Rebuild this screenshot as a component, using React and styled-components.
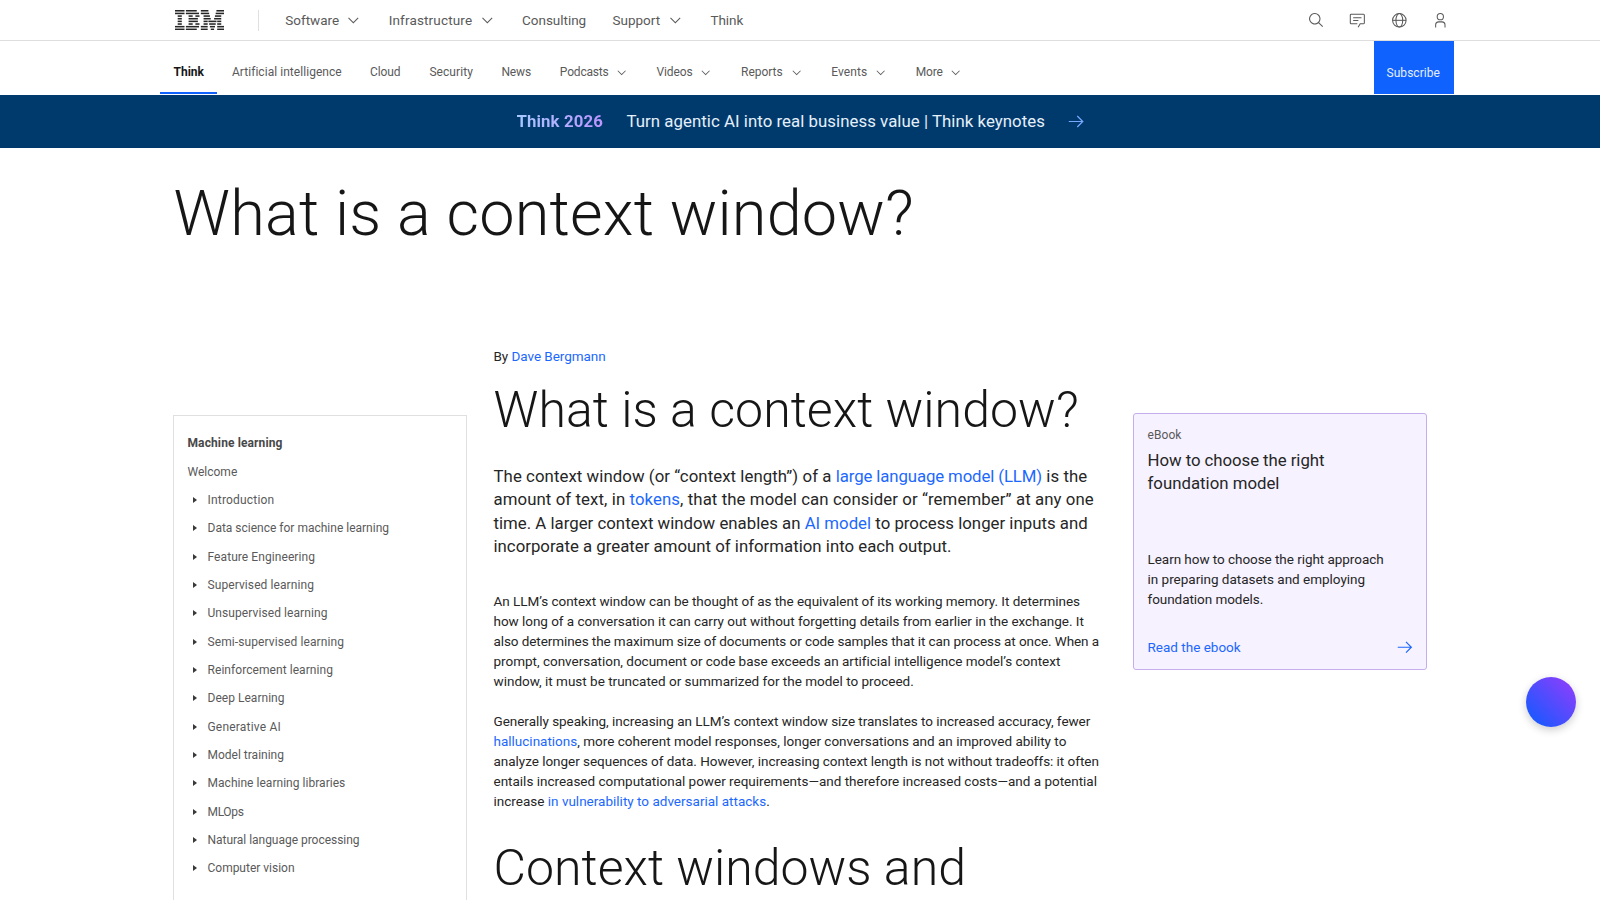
import React from 'react'
import styled, { createGlobalStyle } from 'styled-components'

const topLinks = [
	{ label: 'Software', width: 54.2, spacing: 0.013, menu: true },
	{ label: 'Infrastructure', width: 84.1, spacing: 0.152, menu: true },
	{ label: 'Consulting', width: 63.8, spacing: -0.033 },
	{ label: 'Support', width: 48.7, spacing: -0.015, menu: true },
	{ label: 'Think', width: 33, spacing: -0.1 }
]

const tabs = [
	{ label: 'Think', width: 30.2, spacing: 0.01, active: true },
	{ label: 'Artificial intelligence', width: 109.7, spacing: 0.046 },
	{ label: 'Cloud', width: 31.2, spacing: -0.09 },
	{ label: 'Security', width: 43.7, spacing: 0.066 },
	{ label: 'News', width: 30.2, spacing: -0.1 },
	{ label: 'Podcasts', width: 68.4, spacing: -0.18, menu: true },
	{ label: 'Videos', width: 56.3, spacing: -0.12, menu: true },
	{ label: 'Reports', width: 61.8, spacing: -0.046, menu: true },
	{ label: 'Events', width: 56.3, spacing: 0.08, menu: true },
	{ label: 'More', width: 46.8, spacing: -0.16, menu: true }
]

const chapters = [
	['Introduction', 0.19],
	['Data science for machine learning', 0],
	['Feature Engineering', 0.077],
	['Supervised learning', 0.088],
	['Unsupervised learning', 0.08],
	['Semi-supervised learning', 0.098],
	['Reinforcement learning', 0.063],
	['Deep Learning', 0.027],
	['Generative AI', 0.2],
	['Model training', 0.002],
	['Machine learning libraries', 0.03],
	['MLOps', -0.35],
	['Natural language processing', -0.028],
	['Computer vision', -0.012]
]

// bars of the logo, top to bottom: [x, width] pairs on a 1000 wide grid
const logoBars = [
	[[0, 194], [222, 222], [527, 155], [845, 155]],
	[[0, 194], [222, 268], [527, 170], [830, 170]],
	[[55, 84], [277, 84], [416, 84], [583, 130], [815, 129]],
	[[55, 84], [277, 190], [583, 146], [798, 146]],
	[[55, 84], [277, 190], [583, 84], [681, 166], [861, 83]],
	[[55, 84], [277, 84], [416, 84], [583, 84], [697, 134], [861, 83]],
	[[0, 194], [222, 268], [527, 140], [712, 104], [861, 139]],
	[[0, 194], [222, 222], [527, 140], [730, 68], [861, 139]]
]

const Logo = () => (
	<LogoSvg viewBox="0 0 1000 400" preserveAspectRatio="none">
		{logoBars.map((bars, row) => bars.map(([x, width]) => (
			<rect key={`${row}-${x}`} x={x} y={row * 53} width={width} height="31" />
		)))}
	</LogoSvg>
)

const Chevron = ({ size }) => (
	<Icon viewBox="0 0 32 32" size={size}>
		<path d="M16 22 6 12 7.4 10.6 16 19.2 24.6 10.6 26 12z" />
	</Icon>
)

const ArrowRight = ({ size }) => (
	<Icon viewBox="0 0 32 32" size={size}>
		<path d="M18 6 16.57 7.393 24.15 15H3v2h21.15l-7.58 7.573L18 26l10-10z" />
	</Icon>
)

const Masthead = () => (
	<TopBar>
		<Logo />
		<Divider />
		<TopNav>
			{topLinks.map(({ label, width, spacing, menu }) => (
				<TopLink key={label}>
					<TopLabel width={width} spacing={spacing}>{label}</TopLabel>
					{menu && <Chevron size={16.67} />}
				</TopLink>
			))}
		</TopNav>
		<Tools>
			<Tool>
				<Icon viewBox="0 0 32 32" size={16.67}>
					<path d="M29,27.5859l-7.5521-7.5521a11.0177,11.0177,0,1,0-1.4141,1.4141L27.5859,29ZM4,13a9,9,0,1,1,9,9A9.01,9.01,0,0,1,4,13Z" />
				</Icon>
			</Tool>
			<Tool>
				<LineIcon viewBox="0 0 32 32" size={16.67}>
					<path d="M16 22.5H4A1.5 1.5 0 0 1 2.5 21V6A1.5 1.5 0 0 1 4 4.5h24A1.5 1.5 0 0 1 29.5 6v15a1.5 1.5 0 0 1-1.500 1.500h-6.500l-4 7" />
					<path d="M8 11h16M8 16.500h10" />
				</LineIcon>
			</Tool>
			<Tool>
				<LineIcon viewBox="0 0 32 32" size={16.67}>
					<circle cx="16" cy="16" r="13" />
					<ellipse cx="16" cy="16" rx="6.5" ry="13" />
					<path d="M3 16h26" />
				</LineIcon>
			</Tool>
			<Tool>
				<LineIcon viewBox="0 0 32 32" size={16.67}>
					<circle cx="16" cy="9" r="6" />
					<path d="M7 30v-5a6 6 0 0 1 6-6h6a6 6 0 0 1 6 6v5" />
				</LineIcon>
			</Tool>
		</Tools>
	</TopBar>
)

const Tabs = () => (
	<TabBar>
		{tabs.map(({ label, width, spacing, active, menu }) => (
			<Tab key={label} active={active}>
				<TabLabel width={width} spacing={spacing}>
					{label}
					{menu && <Chevron size={13.33} />}
				</TabLabel>
			</Tab>
		))}
		<Subscribe>Subscribe</Subscribe>
	</TabBar>
)

const Contents = () => (
	<Sidebar>
		<SideTitle>Machine learning</SideTitle>
		<SideLink spacing={0}>Welcome</SideLink>
		{chapters.map(([label, spacing]) => (
			<SideLink key={label} spacing={spacing}>
				<Caret viewBox="0 0 4 6"><path d="M0 0 4 3 0 6z" /></Caret>
				{label}
			</SideLink>
		))}
	</Sidebar>
)

const Article = () => (
	<Content>
		<Byline>By <Link>Dave Bergmann</Link></Byline>
		<Heading spacing={0.06}>What is a context window?</Heading>
		<Lead>
			<Line spacing={0.068}>The context window (or “context length”) of a <Link spacing={-0.11}>large language model (LLM)</Link> is the</Line>
			<Line spacing={0.087}>amount of text, in <Link>tokens</Link>, that the model can consider or “remember” at any one</Line>
			<Line spacing={0.012}>time. A larger context window enables an <Link>AI model</Link> to process longer inputs and</Line>
			<Line spacing={0.008}>incorporate a greater amount of information into each output.</Line>
		</Lead>
		<Paragraph>
			<Line spacing={-0.032}>An LLM’s context window can be thought of as the equivalent of its working memory. It determines</Line>
			<Line spacing={-0.032}>how long of a conversation it can carry out without forgetting details from earlier in the exchange. It</Line>
			<Line spacing={-0.08}>also determines the maximum size of documents or code samples that it can process at once. When a</Line>
			<Line spacing={-0.015}>prompt, conversation, document or code base exceeds an artificial intelligence model’s context</Line>
			<Line spacing={-0.002}>window, it must be truncated or summarized for the model to proceed.</Line>
		</Paragraph>
		<Paragraph>
			<Line spacing={-0.029}>Generally speaking, increasing an LLM’s context window size translates to increased accuracy, fewer</Line>
			<Line spacing={-0.001}><Link>hallucinations</Link>, more coherent model responses, longer conversations and an improved ability to</Line>
			<Line spacing={-0.033}>analyze longer sequences of data. However, increasing context length is not without tradeoffs: it often</Line>
			<Line spacing={-0.007}>entails increased computational power requirements—and therefore increased costs—and a potential</Line>
			<Line spacing={0.005}>increase <Link>in vulnerability to adversarial attacks</Link>.</Line>
		</Paragraph>
		<Heading spacing={0.02}>Context windows and</Heading>
	</Content>
)

const EbookCard = () => (
	<Card>
		<Eyebrow>eBook</Eyebrow>
		<CardTitle>
			<Line spacing={-0.047}>How to choose the right</Line>
			<Line spacing={0.007}>foundation model</Line>
		</CardTitle>
		<CardText>
			<Line spacing={-0.049}>Learn how to choose the right approach</Line>
			<Line spacing={-0.009}>in preparing datasets and employing</Line>
			<Line spacing={-0.05}>foundation models.</Line>
		</CardText>
		<CardLink>
			Read the ebook
			<ArrowRight size={18.5} />
		</CardLink>
	</Card>
)

const App = () => (
	<Page>
		<GlobalStyle />
		<Masthead />
		<Tabs />
		<Banner>
			<BannerTag>Think 2026</BannerTag>
			<BannerText>Turn agentic AI into real business value | Think keynotes</BannerText>
			<ArrowRight size={19} />
		</Banner>
		<Title>What is a context window?</Title>
		<Columns>
			<Contents />
			<Article />
			<EbookCard />
		</Columns>
		<ChatButton aria-label="Chat" />
	</Page>
)

export default App

const GlobalStyle = createGlobalStyle`
  * { box-sizing: border-box; }
  body {
    margin: 0;
    background: #fff;
    color: #161616;
    font-family: Roboto, 'Liberation Sans', sans-serif;
    overflow: hidden;
  }
  h1, h2, p { margin: 0; }
`

const Page = styled.div`
  height: 900px;
  overflow: hidden;
`
const Icon = styled.svg`
  flex: none;
  width: ${({ size }) => size}px;
  height: ${({ size }) => size}px;
  fill: currentColor;
`
const LineIcon = styled(Icon)`
  fill: none;
  stroke: currentColor;
  stroke-width: 2;
  overflow: visible;
`
const TopBar = styled.header`
  display: flex;
  align-items: center;
  height: 41px;
  padding: 0 139px 0 174.5px;
  border-bottom: 1px solid #dedede;
  color: #5a5a5a;
`
const LogoSvg = styled.svg`
  width: 49px;
  height: 20px;
  fill: #262626;
`
const Divider = styled.div`
  width: 1px;
  height: 21px;
  margin: 0 26.2px 0 34.5px;
  background: #e0e0e0;
`
const TopNav = styled.nav`
  display: flex;
  gap: 26.67px;
`
const TopLink = styled.div`
  display: flex;
  align-items: center;
  gap: 6px;
`
const TopLabel = styled.span`
  width: ${({ width }) => width}px;
  font-size: 13.5px;
  line-height: 20px;
  letter-spacing: ${({ spacing }) => spacing}px;
  white-space: nowrap;
`
const Tools = styled.div`
  display: flex;
  margin-left: auto;
`
const Tool = styled.div`
  display: flex;
  justify-content: center;
  width: 41.3px;
`
const TabBar = styled.nav`
  display: flex;
  height: 54px;
  padding: 0 146.5px 1px 160px;
`
const Tab = styled.div`
  display: flex;
  align-items: center;
  margin-right: ${({ active }) => (active ? '1px' : '0')};
  padding: 11.5px ${({ active }) => (active ? '13.15px 0 13.5px' : '14.15px 0')};
  padding-bottom: 0;
  border-bottom: 2.5px solid ${({ active }) => (active ? '#0f62fe' : 'transparent')};
  color: ${({ active }) => (active ? '#161616' : '#5a5a5a')};
  font-weight: ${({ active }) => (active ? 700 : 400)};
`
const TabLabel = styled.span`
  display: flex;
  align-items: center;
  justify-content: space-between;
  width: ${({ width }) => width}px;
  font-size: 12px;
  line-height: 18px;
  letter-spacing: ${({ spacing }) => spacing}px;
  white-space: nowrap;
`
const Subscribe = styled.div`
  width: 80px;
  margin-left: auto;
  padding: 22px 0 0 13px;
  background: #0f62fe;
  color: #e5eeff;
  font-size: 12px;
  line-height: 20px;
  letter-spacing: 0.05px;
`
const Banner = styled.div`
  display: flex;
  align-items: center;
  height: 53px;
  padding-left: 516.5px;
  background: #003a6d;
  color: #78a9ff;
  font-size: 16.8px;
  line-height: 21px;
`
const BannerTag = styled.span`
  width: 86.5px;
  margin-right: 23.5px;
  padding-bottom: 1px;
  background: linear-gradient(90deg, #a6c8ff, #be95ff);
  background-clip: text;
  color: transparent;
  font-weight: 700;
  letter-spacing: 0.116px;
  white-space: nowrap;
`
const BannerText = styled.span`
  width: 419px;
  margin-right: 21px;
  padding-bottom: 1px;
  color: #e5f0fa;
  letter-spacing: 0.052px;
  white-space: nowrap;
`
const Title = styled.h1`
  padding: 28.5px 0 0 173.5px;
  font-size: 63px;
  font-weight: 300;
  line-height: 74px;
  letter-spacing: 0.2px;
`
const Columns = styled.main`
  display: grid;
  grid-template-columns: 294px 613px 294px;
  column-gap: 26.5px;
  align-items: start;
  padding: 96.5px 0 0 173px;
`
const Sidebar = styled.aside`
  height: 620px;
  margin-top: 68px;
  padding: 13.2px 13.5px;
  border: 1px solid #e0e0e0;
`
const SideLink = styled.div`
  display: flex;
  align-items: center;
  height: 28.33px;
  color: #5a5a5a;
  font-size: 12px;
  letter-spacing: ${({ spacing }) => spacing}px;
`
const SideTitle = styled(SideLink)`
  color: #484848;
  font-weight: 700;
  letter-spacing: 0.115px;
`
const Caret = styled.svg`
  width: 4px;
  height: 6px;
  margin: 0 11px 0 5px;
  fill: #393939;
`
const Content = styled.article`
  margin-top: -1px;
  color: #262626;
  white-space: nowrap;
`
const Link = styled.a`
  color: #1c68fe;
  letter-spacing: ${({ spacing }) => (spacing ? `${spacing}px` : 'inherit')};
`
const Byline = styled.p`
  font-size: 13.5px;
  line-height: 20px;
  letter-spacing: -0.05px;
`
const Heading = styled.h2`
  color: #161616;
  font-size: 50px;
  font-weight: 300;
  line-height: 58px;
  letter-spacing: ${({ spacing }) => spacing}px;

  p + & {
    margin-top: 28px;
  }
  ${Byline} + & {
    margin-top: 15px;
  }
`
const Line = styled.span`
  display: block;
  letter-spacing: ${({ spacing }) => spacing}px;
  white-space: nowrap;
`
const Lead = styled.p`
  margin: 26px 0 32.7px;
  font-size: 16.8px;
  line-height: 23.33px;
`
const Paragraph = styled.p`
  font-size: 13.5px;
  line-height: 20px;

  & + & {
    margin-top: 20px;
  }
`
const Card = styled.aside`
  height: 257px;
  margin-top: 66px;
  padding: 12px 13px 12px 13.5px;
  border: 1px solid #c5aeee;
  border-radius: 3px;
  background: #f6f2ff;
  color: #262626;
`
const Eyebrow = styled.div`
  color: #5a5a5a;
  font-size: 12px;
  line-height: 18px;
  letter-spacing: 0.08px;
`
const CardTitle = styled.div`
  margin-top: 5px;
  font-size: 16.8px;
  line-height: 23.33px;
`
const CardText = styled.p`
  margin-top: 53.8px;
  font-size: 13.5px;
  line-height: 20px;
`
const CardLink = styled.div`
  display: flex;
  align-items: center;
  justify-content: space-between;
  margin-top: 27px;
  color: #1c68fe;
  font-size: 13.5px;
  line-height: 20px;

  svg {
    margin: 2px -1px 0 0;
  }
`
const ChatButton = styled.button`
  position: fixed;
  top: 677px;
  right: 24px;
  width: 50px;
  height: 50px;
  border: 0;
  border-radius: 50%;
  background: linear-gradient(45deg, #1f57ff 15%, #8a3ffc 90%);
  box-shadow: 0 3px 8px rgba(0, 0, 0, 0.2);
`
